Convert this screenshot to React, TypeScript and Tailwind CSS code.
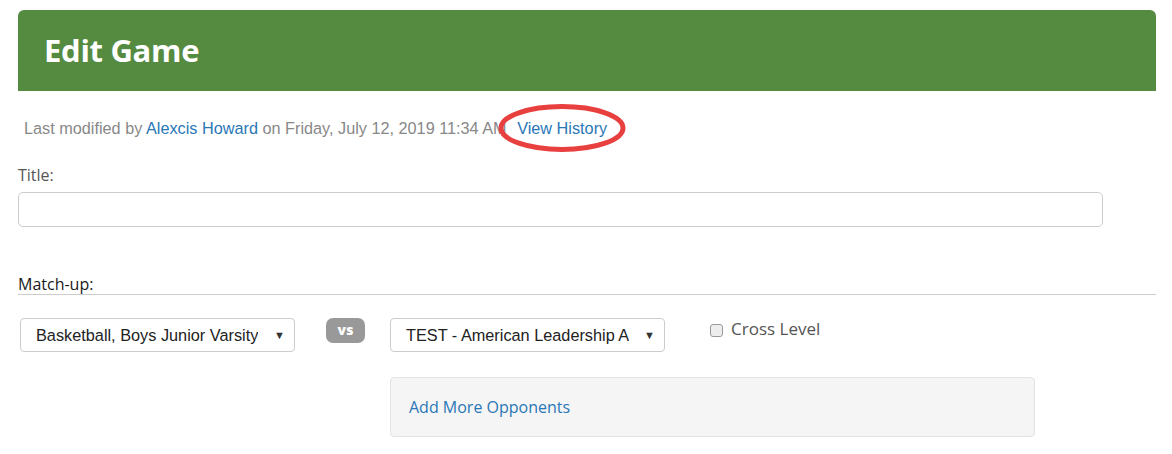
import React from "react";

const arial = "font-['Liberation_Sans',Arial,sans-serif]";
const open = "font-['Open_Sans',sans-serif]";

function Select({ label }: { label: string }) {
  return (
    <div
      className={`flex h-[34px] w-[275px] items-center justify-between rounded-[4px] border border-[#ccc] bg-white pl-[15px] pr-[9px] text-[16.3px] text-[#222] ${arial}`}
    >
      <span className="truncate">{label}</span>
      <span className="ml-2 text-[11px] text-[#333]">▼</span>
    </div>
  );
}

export default function App() {
  return (
    <div className="min-h-[454px] bg-white pt-[10px]">
      <div className="mx-[18px] w-[1138px]">
        <div className="flex h-[81px] items-center rounded-t-[6px] bg-[#558b41] px-[26px]">
          <h1 className={`text-[31px] font-bold tracking-[-0.3px] text-white ${open}`}>Edit Game</h1>
        </div>

        <div className={`mt-[25px] pl-[6px] text-[16.25px] leading-[24px] text-[#888] ${arial}`}>
          Last modified by <span className="text-[#2a77b6]">Alexcis Howard</span> on Friday, July 12, 2019 11:34 AM{" "}
          <span className="relative ml-[6px] text-[#2a77b6]">
            View History
            <svg
              className="pointer-events-none absolute left-[-19px] top-[-16px]"
              width="128"
              height="50"
              viewBox="0 0 128 50"
            >
              <ellipse cx="64" cy="25" rx="61" ry="21.5" fill="none" stroke="#e8403f" strokeWidth="5" />
            </svg>
          </span>
        </div>

        <div className={`mt-[23px] text-[16px] leading-[24px] text-[#555] ${open}`}>Title:</div>
        <div className="mt-[5px] h-[35px] w-[1085px] rounded-[5px] border border-[#ccc] bg-white" />

        <div className={`mt-[47px] border-b border-[#ccc] text-[16px] font-medium leading-[20px] text-[#1a1a1a] ${open}`}>
          Match-up:
        </div>

        <div className="mt-[23px] flex items-start">
          <div className="ml-[2px]">
            <Select label="Basketball, Boys Junior Varsity" />
          </div>
          <div
            className={`ml-[31px] flex h-[25px] w-[39px] items-center justify-center rounded-[7px] bg-[#999] pb-[2px] text-[14px] font-extrabold text-white ${open}`}
          >
            vs
          </div>
          <div className="ml-[25px] flex flex-col">
            <div className="flex items-start">
              <Select label="TEST - American Leadership A" />
              <label className={`ml-[45px] mt-[-2px] flex items-center gap-[8px] text-[17px] text-[#555] ${open}`}>
                <span className="mt-[4px] h-[13px] w-[13px] rounded-[3px] border border-[#999] bg-[#eee]" />
                Cross Level
              </label>
            </div>
            <div className="mt-[25px] flex h-[60px] w-[645px] items-center rounded-[4px] border border-[#e3e3e3] bg-[#f5f5f5] px-[18px]">
              <span className={`text-[16px] text-[#2a77b6] ${open}`}>Add More Opponents</span>
            </div>
          </div>
        </div>
      </div>
    </div>
  );
}
